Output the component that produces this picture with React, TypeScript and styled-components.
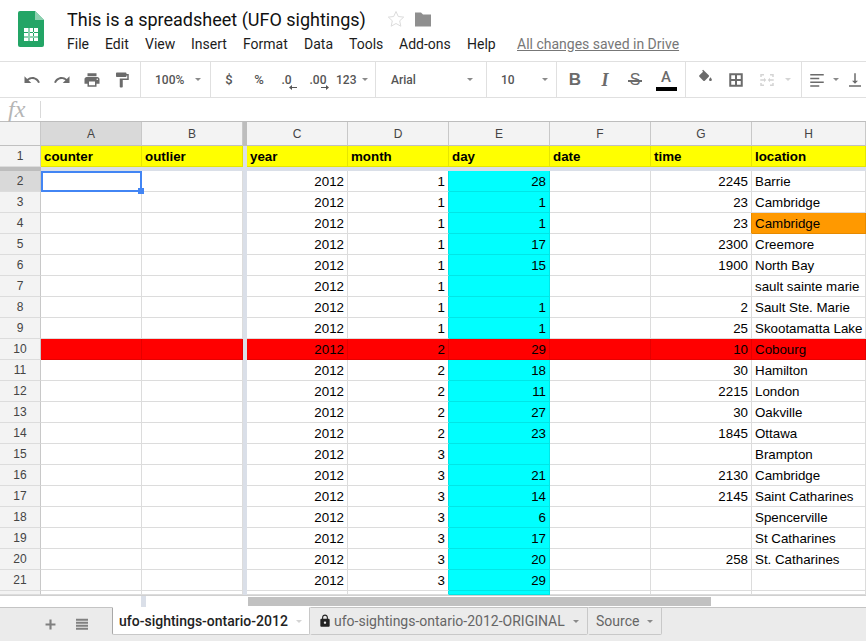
import React from "react";
import styled, { createGlobalStyle } from "styled-components";

const Global = createGlobalStyle`
  html, body { margin: 0; padding: 0; background: #fff; }
  * { box-sizing: border-box; }
`;

const Page = styled.div`
  width: 866px; height: 641px; overflow: hidden; display: flex; flex-direction: column;
  font-family: Roboto, "Liberation Sans", sans-serif; background: #fff;
`;
const Header = styled.header`
  height: 61px; display: flex; padding-left: 18px; flex: none;
`;
const Logo = styled.svg`
  width: 26px; height: 36px; margin-top: 11px; flex: none;
`;
const TitleColumn = styled.div`
  margin-left: 23px; display: flex; flex-direction: column;
`;
const TitleRow = styled.div`
  display: flex; align-items: center; height: 22px; margin-top: 8px;
`;
const Title = styled.div`
  font-size: 18px; color: #111; white-space: nowrap; width: 320px;
`;
const Star = styled.svg`
  width: 18px; height: 18px; fill: none; stroke: #dcdcdc; stroke-width: 1;
`;
const Folder = styled.svg`
  width: 18px; height: 18px; fill: #8f8f8f; margin-left: 9px;
`;
const Menu = styled.nav`
  display: flex; margin-top: 4px; height: 20px; align-items: center; font-size: 14px; color: #1c1c1c;
`;
const MenuItem = styled.span<{ $w: number }>`
  width: ${(p) => p.$w}px; white-space: nowrap;
`;
const Saved = styled.span`
  color: #777; text-decoration: underline; white-space: nowrap; margin-left: 16px;
`;

const Toolbar = styled.div`
  height: 37px; flex: none; display: flex; border-top: 1px solid #e0e0e0; border-bottom: 1px solid #e0e0e0;
`;
const ToolGroup = styled.div<{ $w: number; $pad?: number; $last?: boolean }>`
  width: ${(p) => p.$w}px; padding-left: ${(p) => p.$pad ?? 0}px; flex: none; display: flex; align-items: center;
  border-right: ${(p) => (p.$last ? "none" : "1px solid #e0e0e0")};
  color: #666;
`;
const Slot = styled.div<{ $w: number }>`
  width: ${(p) => p.$w}px; flex: none; height: 100%; display: flex; align-items: center; justify-content: center;
`;
const Icon = styled.svg<{ $s?: number; $c?: string; $up?: number }>`
  width: ${(p) => p.$s ?? 18}px; height: ${(p) => p.$s ?? 18}px; fill: ${(p) => p.$c ?? "#6b6b6b"}; display: block;
  margin-top: ${(p) => -(p.$up ?? 0)}px;
`;
const Caret = styled.span<{ $light?: boolean }>`
  width: 0; height: 0; border-left: 3px solid transparent; border-right: 3px solid transparent;
  border-top: 3px solid ${(p) => (p.$light ? "#d4d4d4" : "#8a8a8a")}; flex: none;
`;
const ToolText = styled.span<{ $w?: number; $size?: number; $gap?: number }>`
  font-size: ${(p) => p.$size ?? 12}px; font-weight: 500; color: #555; white-space: nowrap;
  margin-left: ${(p) => p.$gap ?? 0}px;
  ${(p) => (p.$w ? `width: ${p.$w}px;` : "")}
`;
const FormatLetter = styled.span<{ $serif?: boolean }>`
  font-family: ${(p) => (p.$serif ? '"Liberation Serif", serif' : '"Liberation Sans", sans-serif')};
  font-size: ${(p) => (p.$serif ? 18 : 17)}px; font-weight: 700; color: #6b6b6b; line-height: 18px;
  font-style: ${(p) => (p.$serif ? "italic" : "normal")};
`;
const StruckLetter = styled.span`
  position: relative; font-family: "Liberation Sans", sans-serif; font-size: 16px; font-weight: 400; color: #6b6b6b; line-height: 18px;
  &::after {
    content: ""; position: absolute; left: -2px; right: -2px; top: 9px; height: 2px; background: #6b6b6b;
  }
`;
const ColorA = styled.div`
  display: flex; flex-direction: column; align-items: center; width: 21px; margin-top: 0;
  font-size: 15px; font-weight: 500; color: #6b6b6b; line-height: 17px;
`;
const ColorBar = styled.div`
  width: 21px; height: 4px; background: #000; margin-top: 1px;
`;
const DecimalStack = styled.div`
  display: flex; flex-direction: column; align-items: flex-start; margin-top: 4px;
  font-size: 12px; font-weight: 500; color: #555; line-height: 13px;
`;
const Arrow = styled.svg<{ $off: number }>`
  width: 8px; height: 5px; fill: #555; margin-top: -2px; margin-left: ${(p) => p.$off}px; display: block;
`;

const FormulaBar = styled.div`
  height: 24px; flex: none; display: flex; align-items: center; border-bottom: 1px solid #bdbdbd;
`;
const Fx = styled.div`
  width: 40px; padding-left: 8px; font: italic 24px "Liberation Serif", serif; line-height: 23px; color: #b5b5b5;
`;
const FxDivider = styled.div`
  width: 1px; height: 17px; background: #d9d9d9;
`;

const Sheet = styled.div`
  height: 474px; flex: none; overflow: hidden; border-bottom: 1px solid #d0d0d0;
`;
const Row = styled.div<{ $h: number }>`
  display: flex; height: ${(p) => p.$h}px;
`;
const RowHead = styled.div<{ $active?: boolean; $bottom?: boolean }>`
  width: 41px; flex: none; background: ${(p) => (p.$active ? "#d9d9d9" : "#f3f3f3")};
  border-right: 1px solid #c8c8c8; border-bottom: 1px solid ${(p) => (p.$bottom ? "#c0c0c0" : "#dcdcdc")};
  display: flex; align-items: center; justify-content: center;
  font: 12px "Liberation Sans", sans-serif; color: #444;
`;
const ColHead = styled.div<{ $w: number; $active?: boolean }>`
  width: ${(p) => p.$w}px; flex: none; background: ${(p) => (p.$active ? "#d9d9d9" : "#f3f3f3")};
  border-right: 1px solid #c8c8c8; border-bottom: 1px solid #c0c0c0;
  display: flex; align-items: center; justify-content: center;
  font: 12px "Liberation Sans", sans-serif; color: #444;
`;
const FreezeCol = styled.div<{ $dark?: boolean }>`
  width: 4px; flex: none; background: ${(p) => (p.$dark ? "#bdbdbd" : "#dadfe8")};
`;
const FreezeRow = styled.div`
  height: 4px; display: flex; background: #dadfe8;
`;
const FreezeCorner = styled.div`
  width: 41px; background: #bdbdbd;
`;
const Cell = styled.div<{ $w: number; $bg?: string; $line?: string; $edge?: string; $right?: boolean; $bold?: boolean }>`
  width: ${(p) => p.$w}px; flex: none; position: relative; white-space: nowrap;
  background: ${(p) => p.$bg ?? "#fff"};
  border-right: 1px solid ${(p) => p.$edge ?? p.$line ?? "#dcdcdc"}; border-bottom: 1px solid ${(p) => p.$line ?? "#dcdcdc"};
  display: flex; align-items: center; justify-content: ${(p) => (p.$right ? "flex-end" : "flex-start")};
  padding: 0 3px;
  font: ${(p) => (p.$bold ? 700 : 400)} 13.33px "Liberation Sans", sans-serif; color: #000;
`;
const Selection = styled.div`
  position: absolute; left: 0; top: 0; right: -1px; bottom: -1px; border: 2px solid #4285f4; z-index: 2;
`;
const Handle = styled.div`
  position: absolute; right: -4px; bottom: -4px; width: 6px; height: 6px; background: #4285f4;
`;

const ScrollStrip = styled.div`
  height: 11px; flex: none; display: flex;
`;
const StripStub = styled.div`
  width: 5px; margin-left: 141px; background: #dadfe8;
`;
const Thumb = styled.div`
  width: 463px; height: 9px; margin-left: 102px; margin-top: 1px; background: #c1c1c1;
`;

const TabBar = styled.div`
  flex: 1; display: flex; background: #ebebeb; border-top: 1px solid #c4c4c4; height: 34px;
`;
const TabTools = styled.div`
  width: 112px; flex: none; display: flex; align-items: center; padding-left: 42px; gap: 15px; height: 32px;
`;
const Tab = styled.div<{ $w: number; $active?: boolean; $pad: number }>`
  width: ${(p) => p.$w}px; flex: none; height: 28px; margin-top: -1px; display: flex; align-items: center;
  padding-left: ${(p) => p.$pad}px; font-size: 14px; white-space: nowrap;
  color: ${(p) => (p.$active ? "#222" : "#666")}; font-weight: ${(p) => (p.$active ? 500 : 400)};
  background: ${(p) => (p.$active ? "#fff" : "#ebebeb")};
  border-right: 1px solid #c8c8c8; border-bottom: 1px solid #c8c8c8;
  border-left: 1px solid ${(p) => (p.$active ? "#a8a8a8" : "transparent")};
  border-top: 1px solid ${(p) => (p.$active ? "#fff" : "#c4c4c4")};
  border-radius: 0 0 2px 2px;
`;
const TabCaret = styled.span`
  display: flex; margin-left: 8px;
`;
const TabLock = styled.svg`
  width: 14px; height: 14px; fill: #222; margin-right: 2px; flex: none;
`;

const P = {
  undo: "M12.5 8c-2.65 0-5.05.99-6.9 2.6L2 7v9h9l-3.62-3.62c1.39-1.16 3.16-1.88 5.12-1.88 3.54 0 6.55 2.31 7.6 5.5l2.37-.78C21.08 11.03 17.15 8 12.5 8z",
  redo: "M18.4 10.6C16.55 8.99 14.15 8 11.5 8c-4.65 0-8.58 3.03-9.96 7.22L3.9 16c1.05-3.19 4.05-5.5 7.6-5.5 1.95 0 3.73.72 5.12 1.88L13 16h9V7l-3.6 3.6z",
  print: "M19 8H5c-1.66 0-3 1.34-3 3v6h4v4h12v-4h4v-6c0-1.66-1.34-3-3-3zm-3 11H8v-5h8v5zm3-7c-.55 0-1-.45-1-1s.45-1 1-1 1 .45 1 1-.45 1-1 1zm-1-9H6v4h12V3z",
  paint: "M18 4V3c0-.55-.45-1-1-1H5c-.55 0-1 .45-1 1v4c0 .55.45 1 1 1h12c.55 0 1-.45 1-1V6h1v4H9v11c0 .55.45 1 1 1h2c.55 0 1-.45 1-1v-9h8V4h-3z",
  fill: "M16.6 8.9 8.6 1 7.2 2.4l1.4 1.4-5.2 5.1c-.6.6-.6 1.6 0 2.2l5.5 5.5c.6.6 1.5.6 2.1 0l5.6-5.500c.6-.6.6-1.600 0-2.200zM19 11.500s-2 2.200-2 3.500c0 1.100.9 2 2 2s2-.9 2-2c0-1.300-2-3.500-2-3.500z",
  borders: "M3 3v18h18V3H3zm7.670 15.330h-5v-5h5zm0-7.660h-5v-5h5zm7.660 7.660h-5v-5h5zm0-7.660h-5v-5h5z",
  merge: "M3 4h5v2H5v2H3V4zm13 0h5v4h-2V6h-3V4zM3 16h2v2h3v2H3v-4zm16 0h2v4h-5v-2h3v-2zM3 11h5V9l3 3-3 3v-2H3v-2zm18 0h-5V9l-3 3 3 3v-2h5v-2z",
  align: "M3 4h18v2H3zM3 9h12v2H3zM3 14h18v2H3zM3 19h12v2H3z",
  valign: "M13 3h-2v10H8l4 4 4-4h-3V3zM4 19v2h16v-2H4z",
  lock: "M18 8h-1V6c0-2.76-2.24-5-5-5S7 3.240 7 6v2H6c-1.100 0-2 .9-2 2v10c0 1.100.9 2 2 2h12c1.100 0 2-.9 2-2V10c0-1.100-.9-2-2-2zm-6 9c-1.100 0-2-.9-2-2s.9-2 2-2 2 .9 2 2-.9 2-2 2zm3.100-9H8.900V6c0-1.710 1.390-3.100 3.100-3.100 1.710 0 3.100 1.390 3.100 3.100v2z",
  plus: "M19 13.500h-5.500V19h-3v-5.500H5v-3h5.500V5h3v5.500H19v3z",
  list: "M3 4h18v3H3zM3 8.500h18v3H3zM3 13h18v3H3zM3 17.500h18v3H3z",
};

const Glyph = ({ d, s, c, up }: { d: string; s?: number; c?: string; up?: number }) => (
  <Icon viewBox="0 0 24 24" $s={s} $c={c} $up={up}><path d={d} /></Icon>
);

const columns: [string, number][] = [
  ["A", 101], ["B", 101], ["", 4], ["C", 101], ["D", 101], ["E", 101], ["F", 101], ["G", 101], ["H", 114],
];
const heads = ["counter", "outlier", "year", "month", "day", "date", "time", "location"];

type D = [number, number | "", number | "", string];
const data: D[] = [
  [1, 28, 2245, "Barrie"], [1, 1, 23, "Cambridge"], [1, 1, 23, "Cambridge"], [1, 17, 2300, "Creemore"],
  [1, 15, 1900, "North Bay"], [1, "", "", "sault sainte marie"], [1, 1, 2, "Sault Ste. Marie"],
  [1, 1, 25, "Skootamatta Lake"], [2, 29, 10, "Cobourg"], [2, 18, 30, "Hamilton"], [2, 11, 2215, "London"],
  [2, 27, 30, "Oakville"], [2, 23, 1845, "Ottawa"], [3, "", "", "Brampton"], [3, 21, 2130, "Cambridge"],
  [3, 14, 2145, "Saint Catharines"], [3, 6, "", "Spencerville"], [3, 17, "", "St Catharines"],
  [3, 20, 258, "St. Catharines"], [3, 29, "", ""],
];

const CYAN_LINE = "#00e6e6";
const CY = { $bg: "#00ffff", $line: CYAN_LINE };
const RD = { $bg: "#ff0000", $line: "#e60000" };
const YL = { $bg: "#ffff00", $line: "#e6e600" };
const OR = { $bg: "#ff9900", $line: "#e68a00" };

const DataRow = ({ d, n }: { d: D; n: number }) => {
  const red = n === 10;
  const orange = n === 4;
  const base = red ? RD : {};
  const first = n === 2;
  return (
    <Row $h={21}>
      <RowHead $active={first}>{n}</RowHead>
      <Cell $w={101} {...base}>
        {first && <Selection><Handle /></Selection>}
      </Cell>
      <Cell $w={101} {...base} />
      <FreezeCol />
      <Cell $w={101} {...base} $right>2012</Cell>
      <Cell $w={101} {...base} $edge={red ? undefined : CYAN_LINE} $right>{d[0]}</Cell>
      <Cell $w={101} {...(red ? RD : CY)} $right>{d[1]}</Cell>
      <Cell $w={101} {...base} />
      <Cell $w={101} {...base} $edge={orange ? OR.$line : undefined} $right>{d[2]}</Cell>
      <Cell $w={114} {...(orange ? OR : base)}>{d[3]}</Cell>
    </Row>
  );
};

export default function App() {
  const menu: [string, number][] = [
    ["File", 38], ["Edit", 40], ["View", 46], ["Insert", 52], ["Format", 61], ["Data", 45], ["Tools", 50], ["Add-ons", 68], ["Help", 34],
  ];
  return (
    <Page>
      <Global />
      <Header>
        <Logo viewBox="0 0 26 36">
          <path d="M2 0h15l9 9v25a2 2 0 0 1-2 2H2a2 2 0 0 1-2-2V2a2 2 0 0 1 2-2z" fill="#23a566" />
          <path d="M17 0l9 9h-9z" fill="#8ed1b1" />
          <path d="M6 17h14v13H6z" fill="#fff" />
          <path d="M10.500 17v13h1V17zM15 17v13h1V17zM6 21h14v1H6zM6 25.500h14v1H6z" fill="#23a566" />
        </Logo>
        <TitleColumn>
          <TitleRow>
            <Title>This is a spreadsheet (UFO sightings)</Title>
            <Star viewBox="0 0 18 18"><path d="M9 1.500l2.300 5 5.400.6-4 3.700 1.100 5.400L9 13.500l-4.800 2.700 1.100-5.400-4-3.700 5.400-.6z" /></Star>
            <Folder viewBox="0 0 18 18"><path d="M1 2.500h6l2 2h8v12H1z" /></Folder>
          </TitleRow>
          <Menu>
            {menu.map(([m, w]) => <MenuItem key={m} $w={w}>{m}</MenuItem>)}
            <Saved>All changes saved in Drive</Saved>
          </Menu>
        </TitleColumn>
      </Header>
      <Toolbar>
        <ToolGroup $w={141} $pad={17}>
          <Slot $w={30}><Glyph d={P.undo} /></Slot>
          <Slot $w={30}><Glyph d={P.redo} /></Slot>
          <Slot $w={30}><Glyph d={P.print} /></Slot>
          <Slot $w={30}><Glyph d={P.paint} /></Slot>
        </ToolGroup>
        <ToolGroup $w={70} $pad={14}>
          <ToolText $w={40}>100%</ToolText><Caret />
        </ToolGroup>
        <ToolGroup $w={165} $pad={3}>
          <Slot $w={30}><ToolText $size={13}>$</ToolText></Slot>
          <Slot $w={30}><ToolText $size={13}>%</ToolText></Slot>
          <Slot $w={30}>
            <DecimalStack>.0<Arrow $off={7} viewBox="0 0 8 5"><path d="M0 2.500 3 0v2h5v1H3v2z" /></Arrow></DecimalStack>
          </Slot>
          <Slot $w={30}>
            <DecimalStack>.00<Arrow $off={11} viewBox="0 0 8 5"><path d="M8 2.500 5 0v2H0v1h5v2z" /></Arrow></DecimalStack>
          </Slot>
          <ToolText $w={26} $gap={2}>123</ToolText><Caret />
        </ToolGroup>
        <ToolGroup $w={111} $pad={15}>
          <ToolText $w={76}>Arial</ToolText><Caret />
        </ToolGroup>
        <ToolGroup $w={70} $pad={14}>
          <ToolText $w={41}>10</ToolText><Caret />
        </ToolGroup>
        <ToolGroup $w={129} $pad={3}>
          <Slot $w={30}><FormatLetter>B</FormatLetter></Slot>
          <Slot $w={30}><FormatLetter $serif>I</FormatLetter></Slot>
          <Slot $w={30}><StruckLetter>S</StruckLetter></Slot>
          <Slot $w={32}><ColorA>A<ColorBar /></ColorA></Slot>
        </ToolGroup>
        <ToolGroup $w={116} $pad={4}>
          <Slot $w={30}><Glyph d={P.fill} s={17} up={5} /></Slot>
          <Slot $w={32}><Glyph d={P.borders} /></Slot>
          <Slot $w={30}><Glyph d={P.merge} c="#d4d4d4" /></Slot>
          <Slot $w={12}><Caret $light /></Slot>
        </ToolGroup>
        <ToolGroup $w={64} $pad={4} $last>
          <Slot $w={22}><Glyph d={P.align} /></Slot>
          <Slot $w={16}><Caret /></Slot>
          <Slot $w={22}><Glyph d={P.valign} /></Slot>
        </ToolGroup>
      </Toolbar>
      <FormulaBar>
        <Fx>fx</Fx>
        <FxDivider />
      </FormulaBar>
      <Sheet>
        <Row $h={24}>
          <RowHead $bottom />
          {columns.map(([c, w]) =>
            c ? <ColHead key={c} $w={w} $active={c === "A"}>{c}</ColHead> : <FreezeCol key="f" $dark />
          )}
        </Row>
        <Row $h={21}>
          <RowHead>1</RowHead>
          <Cell $w={101} {...YL} $bold>{heads[0]}</Cell>
          <Cell $w={101} {...YL} $bold>{heads[1]}</Cell>
          <FreezeCol />
          {heads.slice(2).map((h, i) => (
            <Cell key={h} $w={i === 5 ? 114 : 101} {...YL} $bold>{h}</Cell>
          ))}
        </Row>
        <FreezeRow><FreezeCorner /></FreezeRow>
        {data.map((d, i) => <DataRow key={i} d={d} n={i + 2} />)}
        <Row $h={4}>
          <RowHead />
          <Cell $w={101} />
          <Cell $w={101} />
          <FreezeCol />
          <Cell $w={101} />
          <Cell $w={101} $edge={CYAN_LINE} />
          <Cell $w={101} {...CY} />
          <Cell $w={101} />
          <Cell $w={101} />
          <Cell $w={114} />
        </Row>
      </Sheet>
      <ScrollStrip>
        <StripStub />
        <Thumb />
      </ScrollStrip>
      <TabBar>
        <TabTools>
          <Glyph d={P.plus} s={17} c="#808080" />
          <Glyph d={P.list} s={16} c="#808080" />
        </TabTools>
        <Tab $w={198} $active $pad={6}>
          ufo-sightings-ontario-2012<TabCaret><Caret $light /></TabCaret>
        </Tab>
        <Tab $w={278} $pad={7}>
          <TabLock viewBox="0 0 24 24"><path d={P.lock} /></TabLock>
          ufo-sightings-ontario-2012-ORIGINAL<TabCaret><Caret /></TabCaret>
        </Tab>
        <Tab $w={74} $pad={7}>
          Source<TabCaret><Caret /></TabCaret>
        </Tab>
      </TabBar>
    </Page>
  );
}
